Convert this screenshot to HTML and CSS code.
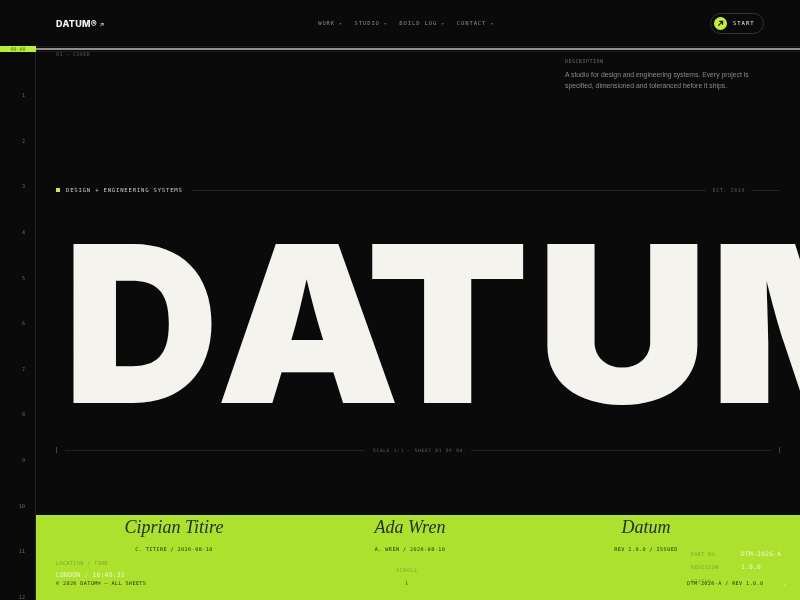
FILE: index.html
```html
<!DOCTYPE html>
<html>
<head>
  <meta charset="UTF-8">
  <title>Datum</title>
  <link rel="stylesheet" href="styles.css">
</head>
<body>
  <div class="page">
    <header class="topbar">
      <div class="logo">DATUM® <span class="logo-arrow">↗</span></div>
      <nav class="nav">
        <a>WORK <i>▾</i></a>
        <a>STUDIO <i>▾</i></a>
        <a>BUILD LOG <i>▾</i></a>
        <a>CONTACT <i>▾</i></a>
      </nav>
      <button class="start">
        <span class="start-dot">
          <svg width="7" height="7" viewBox="0 0 8 8"><path d="M1.5 6.5 6 2M2.6 1.6H6.4V5.4" fill="none" stroke="#0a0a0a" stroke-width="1.3"/></svg>
        </span>
        START
      </button>
    </header>

    <div class="ruler">
      <div class="ruler-tag">00.00</div>
      <div class="ruler-line"></div>
    </div>

    <div class="sheet">
      <aside class="rail">
        <span>1</span><span>2</span><span>3</span><span>4</span><span>5</span><span>6</span>
        <span>7</span><span>8</span><span>9</span><span>10</span><span>11</span><span>12</span><span>13</span>
      </aside>

      <main class="content">
        <section class="cover">
          <div class="cover-top">
            <div class="section-no">01 — COVER</div>
            <div class="description">
              <div class="description-label">DESCRIPTION</div>
              <p>A studio for design and engineering systems. Every project is specified, dimensioned and toleranced before it ships.</p>
            </div>
          </div>

          <div class="kicker">
            <span class="kicker-square"></span>
            <span class="kicker-text">DESIGN + ENGINEERING SYSTEMS</span>
            <span class="rule"></span>
            <span class="kicker-est">EST. 2019</span>
            <span class="rule rule-short"></span>
          </div>

          <h1 class="headline"><span class="kern-d">D</span><span class="kern-a">A</span><span class="kern-t">T</span><span class="kern-u">U</span>M</h1>

          <div class="scale">
            <span class="scale-tick"></span>
            <span class="rule"></span>
            <span class="scale-text">SCALE 1:1 — SHEET 01 OF 04</span>
            <span class="rule"></span>
            <span class="scale-tick"></span>
          </div>
        </section>

        <section class="panel">
          <div class="signatures">
            <div class="sig">
              <div class="sig-name">Ciprian Titire</div>
              <div class="sig-line">C. TITIRE / 2026-08-10</div>
            </div>
            <div class="sig">
              <div class="sig-name">Ada Wren</div>
              <div class="sig-line">A. WREN / 2026-08-10</div>
            </div>
            <div class="sig">
              <div class="sig-name">Datum</div>
              <div class="sig-line">REV 1.0.0 / ISSUED</div>
            </div>
          </div>

          <div class="location">
            <div class="faded">LOCATION / TIME</div>
            <div class="clock">LONDON <em>/</em> 16:49:32</div>
          </div>
          <div class="copyright">© 2026 DATUM® — ALL SHEETS</div>

          <div class="scroll">
            <div class="faded">SCROLL</div>
            <div class="scroll-arrow">↓</div>
          </div>

          <div class="specs">
            <span class="faded">PART NO.</span><span>DTM-2026-A</span>
            <span class="faded">REVISION</span><span>1.0.0</span>
            <span class="faded">STATUS</span><span class="spec-ghost">ISSUED</span>
          </div>
          <div class="part-ref">DTM-2026-A / REV 1.0.0</div>
          <div class="plus">+</div>
        </section>
      </main>
    </div>
  </div>
</body>
</html>
```

FILE: styles.css
```css
* {
  box-sizing: border-box;
}
html, body {
  margin: 0;
  height: 100%;
  overflow: hidden;
  background: #0a0a0a;
}
body {
  font-family: "DejaVu Sans Mono", monospace;
  color: #f4f3ee;
}
.page {
  width: 800px;
  height: 600px;
  display: flex;
  flex-direction: column;
  overflow: hidden;
}

/* top bar */
.topbar {
  height: 46px;
  padding: 0 36px 0 56px;
  display: flex;
  align-items: center;
  justify-content: space-between;
  will-change: transform;
}
.logo {
  width: 46px;
  white-space: nowrap;
  font-family: Inter, sans-serif;
  font-weight: 800;
  font-size: 9px;
  letter-spacing: 0.3px;
  color: #f4f3ee;
}
.logo-arrow {
  font-size: 6px;
  font-weight: 400;
}
.nav {
  display: flex;
  gap: 12px;
}
.nav a {
  font-size: 5.5px;
  letter-spacing: 0.9px;
  color: #8c8c88;
  white-space: nowrap;
}
.nav i {
  font-style: normal;
  font-size: 4px;
}
.start {
  width: 54px;
  height: 21px;
  padding: 0 0 0 3px;
  display: flex;
  align-items: center;
  gap: 6px;
  background: none;
  border: 1px solid #333331;
  border-radius: 11px;
  font-family: "DejaVu Sans Mono", monospace;
  font-size: 5.5px;
  letter-spacing: 1px;
  color: #e8e7e2;
}
.start-dot {
  width: 13px;
  height: 13px;
  border-radius: 50%;
  background: #c2f42c;
  display: flex;
  align-items: center;
  justify-content: center;
}

/* ruler under the bar */
.ruler {
  height: 6px;
  display: flex;
  align-items: center;
  border-top: 1px solid #1c1c1b;
  border-bottom: 1px solid #1c1c1b;
  will-change: transform;
}
.ruler-tag {
  width: 36px;
  height: 6px;
  flex: none;
  background: #b9ef2f;
  color: #55700f;
  font-size: 5px;
  line-height: 6px;
  text-align: center;
}
.ruler-line {
  flex: 1;
  height: 2px;
  background: #8f8f8c;
}

.sheet {
  flex: 1;
  min-height: 0;
  display: flex;
}

/* numbered rail */
.rail {
  width: 36px;
  flex: none;
  border-right: 1px solid #232322;
  padding: 40px 10px 0 0;
  display: flex;
  flex-direction: column;
  align-items: flex-end;
  font-size: 5px;
  color: #6a6a67;
  will-change: transform;
}
.rail span {
  height: 45.65px;
  flex: none;
}

.content {
  flex: 1;
  min-width: 0;
  display: flex;
  flex-direction: column;
}

/* cover */
.cover {
  height: 463px;
  padding: 0 20px;
  display: flex;
  flex-direction: column;
  will-change: transform;
}
.cover-top {
  height: 132px;
  display: flex;
  justify-content: space-between;
}
.section-no {
  font-size: 5px;
  letter-spacing: 0.4px;
  color: #5c5c5a;
  margin-top: -1px;
}
.description {
  width: 215px;
  height: 60px;
  padding-top: 6px;
}
.description-label {
  font-size: 5px;
  letter-spacing: 0.5px;
  color: #6f6f6c;
}
.description p {
  margin: 6px 0 0;
  width: 200px;
  font-family: "Liberation Sans", sans-serif;
  font-size: 6.8px;
  line-height: 10.6px;
  color: #8a8a86;
}

.kicker {
  height: 12px;
  display: flex;
  align-items: center;
}
.kicker-square {
  width: 4px;
  height: 4px;
  background: #c2f42c;
  margin-right: 6px;
}
.kicker-text {
  font-size: 5.6px;
  letter-spacing: 0.8px;
  color: #c9c9c4;
  margin-right: 9px;
}
.kicker-est {
  font-size: 5px;
  letter-spacing: 0.6px;
  color: #5c5c5a;
  margin: 0 7px;
}
.rule {
  flex: 1;
  height: 1px;
  background: #232322;
}
.rule-short {
  flex: none;
  width: 28px;
}

.headline {
  margin: 42px 0 0 14px;
  height: 172px;
  font-family: Inter, sans-serif;
  font-weight: 900;
  font-size: 219px;
  line-height: 172px;
  letter-spacing: -6px;
  color: #f4f3ee;
  white-space: nowrap;
  transform: scaleX(1.09);
  transform-origin: left center;
}
.kern-d {
  display: inline-block;
  margin: 0 -12.4px 0 -5.6px;
  transform: scaleX(0.9);
  transform-origin: left center;
}
.kern-a {
  display: inline-block;
  margin-right: -31px;
  transform: scaleX(0.97);
  transform-origin: left center;
}
.kern-t {
  margin-right: 12px;
}
.kern-u {
  margin-right: 7px;
}

.scale {
  margin-top: 35px;
  height: 10px;
  display: flex;
  align-items: center;
}
.scale-tick {
  width: 1px;
  height: 6px;
  background: #444442;
}
.scale .rule {
  margin: 0 8px;
}
.scale-text {
  font-size: 4.6px;
  letter-spacing: 0.7px;
  color: #62625c;
}

/* lime panel */
.panel {
  flex: 1;
  position: relative;
  background: #ace22e;
  overflow: hidden;
  padding: 0 36px 0 20px;
  will-change: transform;
}
.signatures {
  display: grid;
  grid-template-columns: repeat(3, 1fr);
}
.sig {
  text-align: center;
}
.sig-name {
  margin-top: 1px;
  height: 22px;
  font-family: "Liberation Serif", serif;
  font-style: italic;
  font-size: 18px;
  line-height: 22px;
  color: #1f2d0c;
}
.sig-line {
  margin-top: 7px;
  font-size: 5.2px;
  line-height: 8px;
  letter-spacing: 0.4px;
  color: #27340c;
}
.faded {
  color: #7fa62a;
}
.location {
  position: absolute;
  left: 20px;
  top: 45px;
  font-size: 5.2px;
  letter-spacing: 0.35px;
}
.clock {
  margin-top: 5px;
  font-size: 6.4px;
  letter-spacing: 0.2px;
  color: #f0f6d8;
}
.clock em {
  font-style: normal;
  opacity: 0.6;
}
.copyright {
  position: absolute;
  left: 20px;
  top: 65px;
  font-size: 5.2px;
  letter-spacing: 0.35px;
  color: #27340c;
}
.scroll {
  position: absolute;
  left: 340px;
  width: 62px;
  top: 52px;
  text-align: center;
  font-size: 5px;
  letter-spacing: 0.6px;
}
.scroll-arrow {
  margin-top: 5px;
  font-size: 8px;
  color: #55701a;
}
.specs {
  position: absolute;
  left: 655px;
  top: 35px;
  display: grid;
  grid-template-columns: 50px auto;
  row-gap: 5px;
  font-size: 6.2px;
  line-height: 8.4px;
  letter-spacing: 0.3px;
  color: #eef5d2;
  white-space: nowrap;
}
.specs .faded {
  font-size: 5.2px;
}
.spec-ghost {
  opacity: 0.12;
}
.part-ref {
  position: absolute;
  left: 651px;
  top: 65px;
  font-size: 5.2px;
  letter-spacing: 0.35px;
  color: #27340c;
}
.plus {
  position: absolute;
  left: 747px;
  top: 66px;
  font-size: 6px;
  color: #d7ec96;
}
```
